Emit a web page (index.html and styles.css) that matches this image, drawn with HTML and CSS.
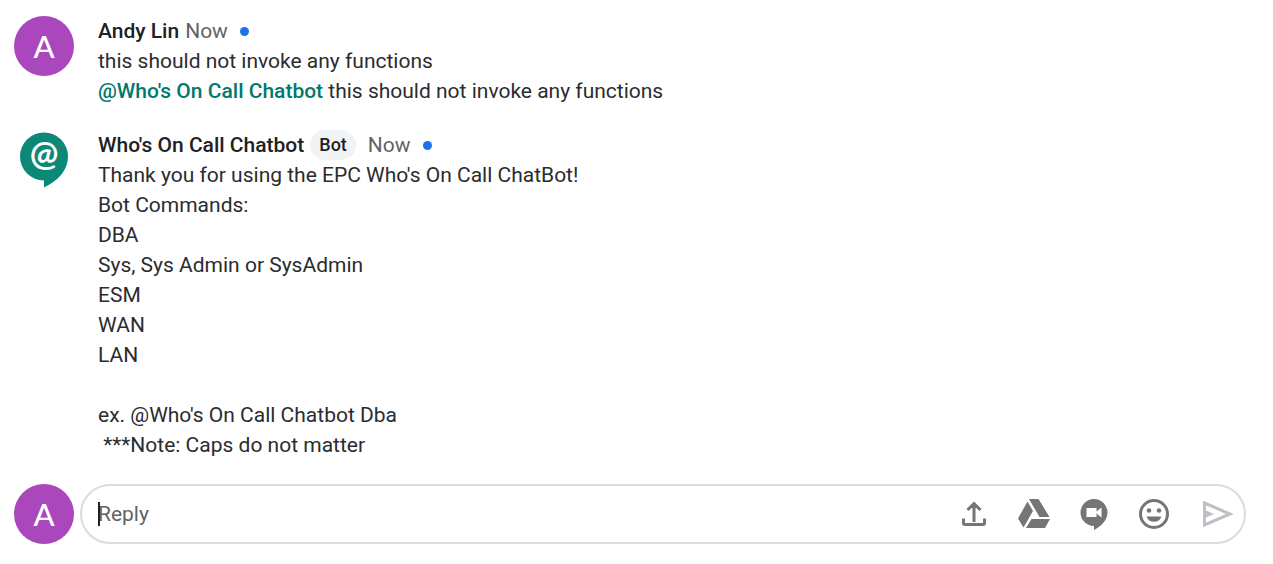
FILE: index.html
```html
<!DOCTYPE html>
<html lang="en">
<head>
<meta charset="utf-8">
<title>Chat thread</title>
<link rel="stylesheet" href="styles.css">
</head>
<body>
<main class="thread">
  <article class="message">
    <div class="avatar">A</div>
    <div class="content">
      <header class="meta"><span class="name">Andy Lin</span><span class="time">Now</span><span class="unread"></span></header>
      <p class="text">this should not invoke any functions
<a class="mention" href="#bot">@Who's On Call Chatbot</a> this should not invoke any functions</p>
    </div>
  </article>
  <article class="message" id="bot">
    <svg class="bot-logo" viewBox="0 0 60 60" aria-hidden="true">
      <path d="M30 2.500A24 24 0 1 0 30 50.500V57.500C44 51 54 40 54 26.500A24 24 0 0 0 30 2.500Z" fill="#0c8876"/>
      <text class="bot-glyph" x="30" y="36" text-anchor="middle">@</text>
    </svg>
    <div class="content">
      <header class="meta"><span class="name">Who's On Call Chatbot</span><span class="badge">Bot</span><span class="time">Now</span><span class="unread"></span></header>
      <p class="text">Thank you for using the EPC Who's On Call ChatBot!
Bot Commands:
DBA
Sys, Sys Admin or SysAdmin
ESM
WAN
LAN

ex. @Who's On Call Chatbot Dba
 ***Note: Caps do not matter</p>
    </div>
  </article>
  <form class="composer">
    <div class="avatar">A</div>
    <div class="reply-box">
      <div class="field"><input class="reply" type="text" placeholder="Reply" aria-label="Reply"></div>
      <div class="tools">
        <button class="tool" type="button" aria-label="Upload file">
          <svg viewBox="0 0 36 36"><path d="M18 26V8M11.500 14L18 7.500L24.500 14M7.500 22.500V27Q7.500 28.500 9 28.500H27Q28.500 28.500 28.500 27V22.500" fill="none" stroke="#757575" stroke-width="3"/></svg>
        </button>
        <button class="tool" type="button" aria-label="Insert from Drive">
          <svg viewBox="0 0 36 36"><path d="M13 3H22.500L33.500 21H23.500ZM11.500 5.500L17 15L7.500 31.500L2 22.500ZM15.500 23H34L29 32H10Z" fill="#757575"/></svg>
        </button>
        <button class="tool" type="button" aria-label="Add video meeting">
          <svg viewBox="0 0 36 36"><path d="M18 3A13.500 13.500 0 1 0 18 30V34C25 30.500 31.500 24 31.500 16.500A13.500 13.500 0 0 0 18 3Z" fill="#757575"/><path d="M10.500 12H20.500V15.500L25.500 11.500V21.500L20.500 17.500V21H10.500Z" fill="#fff"/></svg>
        </button>
        <button class="tool" type="button" aria-label="Insert emoji">
          <svg viewBox="0 0 36 36"><circle cx="18" cy="18" r="13.500" fill="none" stroke="#757575" stroke-width="3"/><circle cx="13" cy="14.500" r="2.300" fill="#757575"/><circle cx="23" cy="14.500" r="2.300" fill="#757575"/><path d="M10.500 20.500H25.500A8 8 0 0 1 10.500 20.500Z" fill="#757575"/></svg>
        </button>
        <button class="tool send" type="submit" aria-label="Send">
          <svg viewBox="0 0 36 36"><path d="M5.500 7L31 18L5.500 29Z" fill="none" stroke="#bdc1c6" stroke-width="3"/><path d="M6 14L15 18L6 22Z" fill="#bdc1c6"/></svg>
        </button>
      </div>
    </div>
  </form>
</main>
</body>
</html>
```

FILE: styles.css
```css
* { box-sizing: border-box; }
body {
  margin: 0;
  background: #fff;
  color: #2b2c2f;
  font: 21px/30px Roboto, sans-serif;
}
.thread { padding: 16px 27px 20px 14px; }
.message { display: flex; gap: 24px; margin-bottom: 24px; }
.avatar, .bot-logo { flex: none; width: 60px; height: 60px; }
.avatar {
  display: grid;
  place-items: center;
  border-radius: 50%;
  background: #ab47bc;
  color: #fff;
  font-family: Lato, sans-serif;
  font-size: 31px;
  font-weight: 500;
}
.bot-glyph { fill: #fff; font: 700 34px Lato, sans-serif; }
.content { flex: 1; min-width: 0; }
.meta { display: flex; align-items: center; gap: 6px; height: 30px; }
.name, .mention { font-weight: 500; }
.name { color: #202124; }
.time { color: #5f6368; }
.unread {
  width: 9px;
  height: 9px;
  margin-left: 6px;
  border-radius: 50%;
  background: #1a73e8;
}
.badge {
  margin-right: 6px;
  padding: 0 9px;
  border-radius: 15px;
  background: #f1f3f4;
  color: #202124;
  font-size: 18px;
  font-weight: 500;
}
.text { margin: 0; white-space: pre-wrap; }
.mention { color: #00796b; text-decoration: none; }
.composer { display: flex; gap: 6px; }
.reply-box {
  display: flex;
  flex: 1;
  align-items: center;
  height: 60px;
  padding: 0 9px 0 16px;
  border: 2px solid #dadce0;
  border-radius: 30px;
}
.field { position: relative; flex: 1; }
.field::before {
  content: "";
  position: absolute;
  top: 3px;
  left: 0;
  width: 2px;
  height: 24px;
  background: #202124;
}
.reply {
  width: 100%;
  height: 30px;
  padding: 0;
  border: 0;
  outline: 0;
  background: transparent;
  color: #202124;
  font: inherit;
}
.reply::placeholder { color: #5f6368; opacity: 1; }
.tools { display: flex; gap: 24px; }
.tool { width: 36px; height: 36px; padding: 0; border: 0; background: none; }
.tool svg { display: block; width: 36px; height: 36px; }
.send { margin-left: 3px; }
```
